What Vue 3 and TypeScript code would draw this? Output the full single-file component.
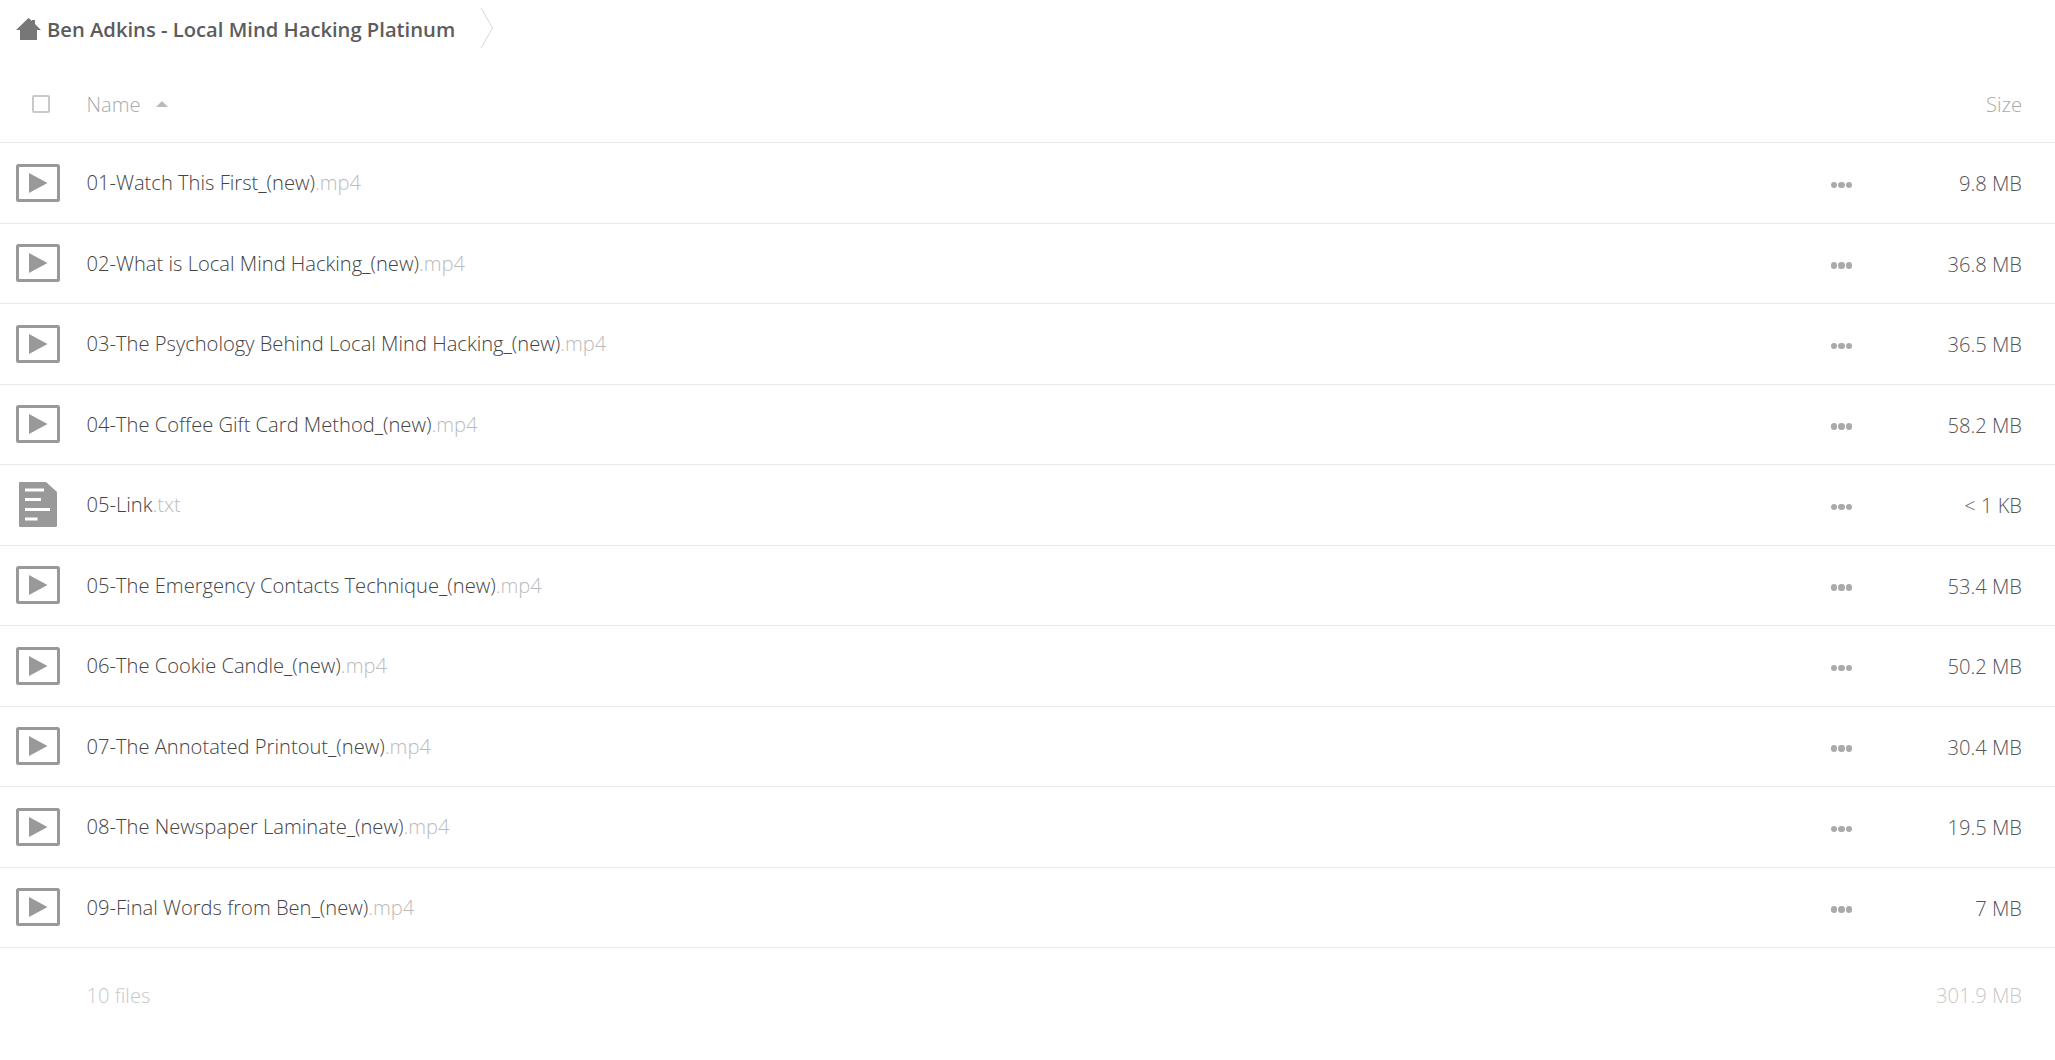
<script setup lang="ts">
type FileRow = { name: string; ext: string; size: string; kind: 'video' | 'text' }

const files: FileRow[] = [
  { name: '01-Watch This First_(new)', ext: '.mp4', size: '9.8 MB', kind: 'video' },
  { name: '02-What is Local Mind Hacking_(new)', ext: '.mp4', size: '36.8 MB', kind: 'video' },
  { name: '03-The Psychology Behind Local Mind Hacking_(new)', ext: '.mp4', size: '36.5 MB', kind: 'video' },
  { name: '04-The Coffee Gift Card Method_(new)', ext: '.mp4', size: '58.2 MB', kind: 'video' },
  { name: '05-Link', ext: '.txt', size: '< 1 KB', kind: 'text' },
  { name: '05-The Emergency Contacts Technique_(new)', ext: '.mp4', size: '53.4 MB', kind: 'video' },
  { name: '06-The Cookie Candle_(new)', ext: '.mp4', size: '50.2 MB', kind: 'video' },
  { name: '07-The Annotated Printout_(new)', ext: '.mp4', size: '30.4 MB', kind: 'video' },
  { name: '08-The Newspaper Laminate_(new)', ext: '.mp4', size: '19.5 MB', kind: 'video' },
  { name: '09-Final Words from Ben_(new)', ext: '.mp4', size: '7 MB', kind: 'video' },
]
</script>

<template>
  <div class="page">
    <nav class="crumbs">
      <svg class="home" viewBox="0 0 25 22" width="25" height="22">
        <path d="M12.500 0 L16 3 V2 H19 V6 L25 12 H21 V22 H4 V12 H0 Z" fill="#777" />
      </svg>
      <span class="crumb-title">Ben Adkins - Local Mind Hacking Platinum</span>
      <svg class="chev" viewBox="0 0 14 40" width="14" height="40">
        <path d="M1 0 L12.500 20 L1 40" fill="none" stroke="#d8d8d8" stroke-width="1" />
      </svg>
    </nav>

    <div class="head">
      <span class="check-cell"><span class="check"></span></span>
      <span class="head-name">Name</span>
      <span class="sort"></span>
      <span class="head-size">Size</span>
    </div>

    <div v-for="f in files" :key="f.name + f.ext" class="row">
      <span class="icon-cell">
        <svg v-if="f.kind === 'video'" viewBox="0 0 44 38" width="44" height="38">
          <rect x="1.500" y="1.500" width="41" height="35" rx="1" fill="none" stroke="#999" stroke-width="3" />
          <path d="M13 9 L31.500 19 L13 29 Z" fill="#999" />
        </svg>
        <svg v-else class="doc" viewBox="0 0 38 45" width="38" height="45">
          <path d="M1 0 H27 L38 10 V43.500 Q38 45 36.500 45 H1.500 Q0 45 0 43.500 V1 Q0 0 1 0 Z" fill="#999" />
          <path d="M6 8 H25 M6 17.500 H22 M6 27.500 H31 M6 37 H18.500" stroke="#fff" stroke-width="3" fill="none" />
        </svg>
      </span>
      <span class="file-name">{{ f.name }}<span class="ext">{{ f.ext }}</span></span>
      <span class="dots"><i></i><i></i><i></i></span>
      <span class="size">{{ f.size }}</span>
    </div>

    <div class="summary">
      <span class="summary-count">10 files</span>
      <span class="summary-size">301.9 MB</span>
    </div>
  </div>
</template>

<style scoped>
.page {
  width: 2055px;
  height: 1060px;
  overflow: hidden;
  background: #fff;
  font-family: "Open Sans", "Liberation Sans", sans-serif;
  font-weight: 300;
  font-size: 20.150px;
  color: #444;
}
.crumbs {
  height: 60px;
  display: flex;
  align-items: center;
  padding-left: 16px;
}
.home { margin-right: 6px; margin-top: -2px; flex: none; }
.crumb-title { font-weight: 600; font-size: 20.200px; color: #5c5c5c; white-space: nowrap; margin-top: -2px; }
.chev { margin-left: 25px; margin-top: -4px; flex: none; }
.head {
  height: 83px;
  box-sizing: border-box;
  display: flex;
  align-items: center;
  border-bottom: 1px solid #e9e9e9;
  color: #aaa;
  padding: 6px 33px 0 0;
}
.check-cell { width: 86.500px; padding-left: 31.500px; box-sizing: border-box; flex: none; }
.check {
  display: block;
  width: 18px;
  height: 18px;
  box-sizing: border-box;
  border: 2px solid #c8c8c8;
  border-radius: 2px;
}
.head-name { line-height: 1; }
.sort {
  width: 0;
  height: 0;
  margin-left: 15px;
  border-left: 6.500px solid transparent;
  border-right: 6.500px solid transparent;
  border-bottom: 6px solid #bbb;
}
.head-size { margin-left: auto; }
.row {
  height: 80.500px;
  box-sizing: border-box;
  display: flex;
  align-items: center;
  border-bottom: 1px solid #e9e9e9;
  padding-right: 33px;
}
.icon-cell {
  width: 86.500px;
  flex: none;
  box-sizing: border-box;
  padding-left: 16px;
  display: flex;
}
.doc { margin-left: 3px; }
.file-name { white-space: pre; flex: 1; margin-top: -1px; }
.ext { color: #bbb; }
.dots { display: flex; gap: 1px; flex: none; margin-top: 4px; }
.dots i {
  display: block;
  width: 6.500px;
  height: 6.500px;
  border-radius: 50%;
  background: #aaa;
}
.size { width: 170px; text-align: right; flex: none; margin-top: 1px; color: #555; }
.summary {
  height: 90px;
  box-sizing: border-box;
  padding: 3px 33px 0 86.500px;
  display: flex;
  align-items: center;
  justify-content: space-between;
  color: #c8c8c8;
}
</style>
